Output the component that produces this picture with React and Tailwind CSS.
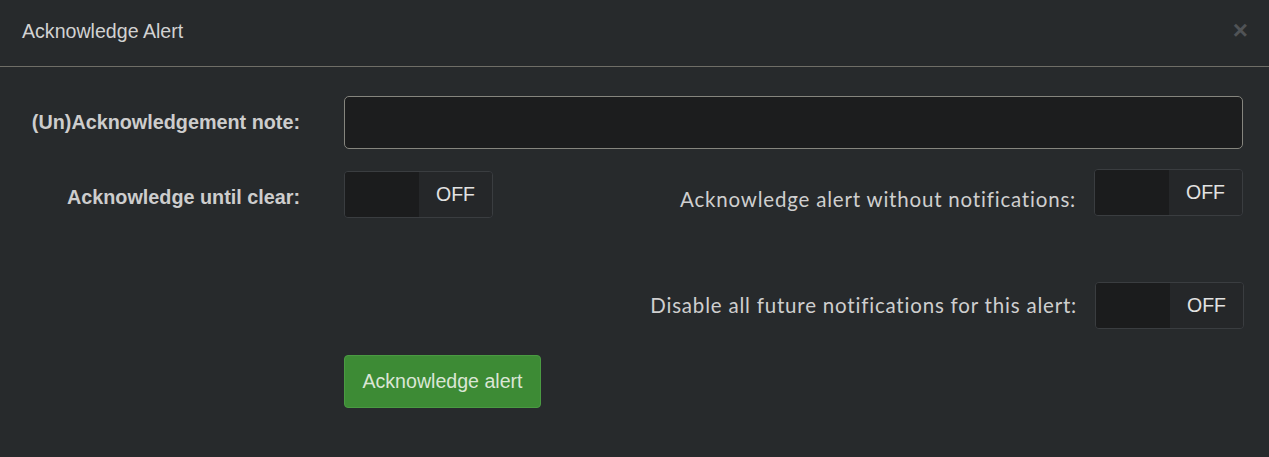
import React from 'react';

const Toggle = ({ className = '' }) => (
  <div className={`flex h-[47px] w-[149px] shrink-0 overflow-hidden rounded-[4px] border border-[#3a3d40] ${className}`}>
    <div className="w-[74px] bg-[#1b1c1d]"></div>
    <div className="flex flex-1 items-center justify-center bg-[#252729] text-[19.5px] text-[#e2e2e2]">OFF</div>
  </div>
);

const App = () => {
  return (
    <div className="h-[457px] w-[1269px] overflow-hidden bg-[#272a2c] font-['Liberation_Sans',Arial,sans-serif]">
      {/* header */}
      <div className="flex h-[67px] items-center justify-between border-b border-[#6f6e67] pl-[22px] pr-[21px]">
        <span className="-mt-[2px] text-[19.6px] text-[#d2d2d2]">Acknowledge Alert</span>
        <span className="-mt-[6px] text-[26px] font-bold leading-none text-[#505356]">×</span>
      </div>

      <div className="pr-[26px] pt-[29px]">
        <div className="flex items-center">
          <label className="w-[300px] shrink-0 text-right text-[19.8px] font-bold text-[#cdcdcd]">(Un)Acknowledgement note:</label>
          <input
            type="text"
            className="ml-[44px] h-[53px] flex-1 rounded-[5px] border border-[#85857e] bg-[#1c1d1e] px-3 text-[19px] text-[#ddd] outline-none"
          />
        </div>

        <div className="mt-[22px] flex">
          <div className="flex items-center">
            <label className="w-[300px] shrink-0 pt-[6px] text-right text-[19.8px] font-bold text-[#cdcdcd]">Acknowledge until clear:</label>
            <Toggle className="ml-[44px]" />
          </div>
          <div className="-mt-[2px] flex flex-1 items-start justify-end">
            <label className="mt-[15px] font-['Lato',sans-serif] text-[20.5px] tracking-[0.8px] text-[#cfcfcf]">Acknowledge alert without notifications:</label>
            <Toggle className="ml-[18px]" />
          </div>
        </div>

        <div className="mt-[64px] flex items-center justify-end">
          <label className="font-['Lato',sans-serif] text-[20.5px] tracking-[0.8px] text-[#cfcfcf]">Disable all future notifications for this alert:</label>
          <Toggle className="ml-[18px] -mr-[1px]" />
        </div>

        <button className="ml-[344px] mt-[26px] flex h-[53px] w-[197px] items-center justify-center rounded-[4px] border border-[#4a9a42] bg-[#3d8b35] text-[19.6px] text-[#dbe6d5]">
          Acknowledge alert
        </button>
      </div>
    </div>
  );
};

export default App;
